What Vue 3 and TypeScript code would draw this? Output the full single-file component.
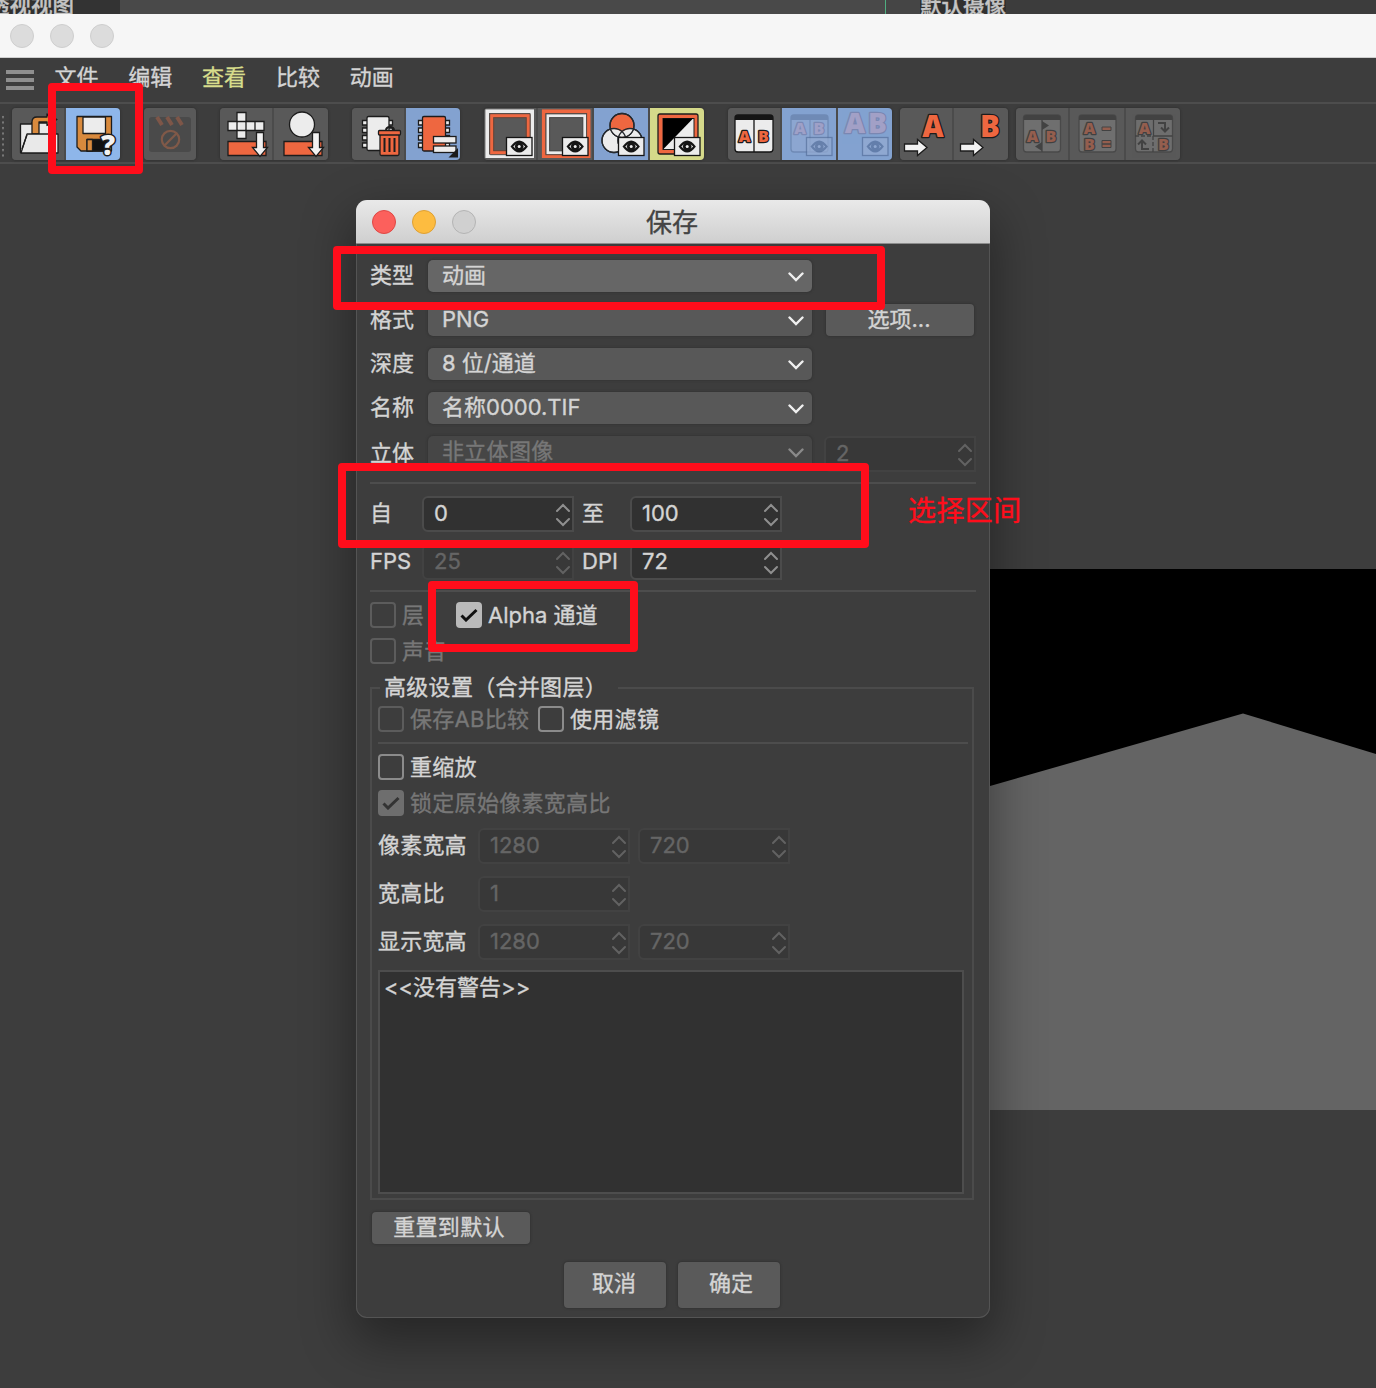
<script setup lang="ts">
interface ToolButton {
  id: string
  x: number
  w: number
  tone?: string
}

const menus = [
  { label: '文件' },
  { label: '编辑' },
  { label: '查看', active: true },
  { label: '比较' },
  { label: '动画' },
]

const groups: ToolButton[][] = [
  [{ id: 'open', x: 12, w: 52 }, { id: 'save', x: 66, w: 54, tone: 'bright' }],
  [{ id: 'clap', x: 144, w: 52 }],
  [{ id: 'grid', x: 220, w: 52 }, { id: 'sphere', x: 274, w: 54 }],
  [{ id: 'trash', x: 352, w: 52 }, { id: 'film', x: 406, w: 54, tone: 'blue' }],
  [
    { id: 'frameA', x: 484, w: 52 },
    { id: 'frameB', x: 538, w: 54 },
    { id: 'rgb', x: 594, w: 54, tone: 'blue' },
    { id: 'alpha', x: 650, w: 54, tone: 'yellow' },
  ],
  [
    { id: 'ab', x: 728, w: 52 },
    { id: 'abEye', x: 782, w: 54, tone: 'blue' },
    { id: 'abBig', x: 838, w: 54, tone: 'blue' },
  ],
  [{ id: 'setA', x: 900, w: 52 }, { id: 'setB', x: 954, w: 54 }],
  [
    { id: 'swap', x: 1016, w: 52 },
    { id: 'equal', x: 1070, w: 54 },
    { id: 'rotate', x: 1126, w: 54 },
  ],
]

const gapBefore = [0, 24, 24, 24, 24, 24, 8, 8]

const eyeAt: Record<string, [number, number]> = {
  frameA: [506, 137],
  frameB: [562, 137],
  rgb: [618, 137],
  alpha: [674, 137],
  abEye: [806, 137],
  abBig: [862, 137],
}

const selects = [
  { label: '类型', value: '动画', hot: true },
  { label: '格式', value: 'PNG', button: '选项...' },
  { label: '深度', value: '8 位/通道' },
  { label: '名称', value: '名称0000.TIF' },
  { label: '立体', value: '非立体图像', off: true, spin: '2' },
]

const ranges = [
  [{ label: '自', value: '0' }, { label: '至', value: '100' }],
  [{ label: 'FPS', value: '25', off: true }, { label: 'DPI', value: '72' }],
]

const sizes = [
  { label: '像素宽高', values: ['1280', '720'] },
  { label: '宽高比', values: ['1'] },
  { label: '显示宽高', values: ['1280', '720'] },
]
</script>

<template>
  <div class="desk">
    <div class="behind">
      <span class="strip-left"><span class="cut">透视视图</span></span>
      <span class="strip-mid"></span>
      <span class="strip-right"><span class="cut">默认摄像</span></span>
    </div>

    <div class="titlebar">
      <i class="dot"></i><i class="dot"></i><i class="dot"></i>
    </div>

    <nav class="menubar">
      <span class="burger"><i></i><i></i><i></i></span>
      <span v-for="m in menus" :key="m.label" class="menu" :class="{ active: m.active }">{{ m.label }}</span>
    </nav>

    <div class="toolbar">
      <span class="grip"></span>
      <div v-for="(g, gi) in groups" :key="gi" class="group" :style="{ marginLeft: gapBefore[gi] + 'px' }">
        <div v-for="b in g" :key="b.id" class="tool" :class="b.tone" :style="{ width: b.w + 'px' }">
          <svg :width="b.w" height="52" :viewBox="`${b.x} 108 ${b.w} 52`">
            <g v-if="b.id === 'open'" stroke="#1c1c1c" stroke-width="1.3" stroke-linejoin="round">
              <path d="M20.500 124h11v-1h24v29.500H20.500z" fill="#e9e9e9" />
              <path d="M32 134v-12q0-5 5-5h10v-3l10 5.500-10 6v-3.500h-8v12z" fill="#d98a3d" />
              <path d="M27 134h31v19H21z" fill="#e9e9e9" />
              <path d="M22 149l5-14" fill="none" />
            </g>
            <g v-else-if="b.id === 'save'" stroke="#1c1c1c" stroke-width="1.3" stroke-linejoin="round">
              <path d="M77 116.500h34.500v34.500H81l-4-4z" fill="#d98a3d" />
              <path d="M83 117h22.500v16.500H83z" fill="#ececec" />
              <path d="M87 139.500h20v11.500H87z" fill="#111" />
              <path d="M87 139.500h5.500v11.500H87z" fill="#d98a3d" />
              <text class="glyph query" x="108" y="154.500" font-size="28">?</text>
            </g>
            <g v-else-if="b.id === 'clap'">
              <rect x="149" y="117" width="42" height="35" rx="3" fill="#4a4a4a" />
              <g stroke="#7d5648" stroke-width="4"><path d="M157 117l5 8M167 117l5 8M177 117l5 8" /></g>
              <g fill="none" stroke="#805948" stroke-width="2.200">
                <circle cx="170.500" cy="139.500" r="8.700" /><path d="M164.500 145.500l12-12" />
              </g>
            </g>
            <g v-else-if="b.id === 'grid' || b.id === 'sphere'" stroke="#1c1c1c" stroke-width="1.300">
              <template v-if="b.id === 'grid'">
                <path d="M228 141.500h38v14h-38z" fill="#ee6740" />
                <path d="M237 112.500h9v9h18v9h-18v8h-9v-8h-9v-9h9z" fill="#ececec" />
                <path d="M237 121.500h9v9h-9zM255 121.500v9" fill="none" />
                <path d="M256.500 132.500h7v15h4l-7.500 9-7.500-9h4z" fill="#f2f2f2" />
              </template>
              <template v-else>
                <path d="M284 141.500h38v14h-38z" fill="#ee6740" />
                <circle cx="302" cy="124.500" r="12.500" fill="#ececec" />
                <path d="M312.500 132.500h7v15h4l-7.500 9-7.500-9h4z" fill="#f2f2f2" />
              </template>
            </g>
            <g v-else-if="b.id === 'trash'" stroke="#1c1c1c" stroke-width="1.300">
              <path d="M362.500 120.500h30v4.500h-30zM362.500 128h30v4.500h-30zM362.500 135.500h30v4.500h-30zM362.500 143h30v4.500h-30z" fill="#ececec" />
              <rect x="367" y="116.500" width="22" height="34" rx="1.500" fill="#ececec" />
              <path d="M386 130.500q0-3.500 4-3.500t4 3.500" fill="none" stroke-width="2" />
              <rect x="380" y="134" width="19" height="21.500" rx="1.500" fill="#ee6740" />
              <rect x="378.500" y="130.500" width="22" height="4.500" rx="1" fill="#ee6740" />
              <path d="M384.500 138v14M389.500 138v14M394.500 138v14" stroke-width="2" />
            </g>
            <g v-else-if="b.id === 'film'" stroke="#1c1c1c" stroke-width="1.300">
              <path d="M418.500 120.500h31v4.500h-31zM418.500 128h31v4.500h-31zM418.500 135.500h31v4.500h-31zM418.500 143h31v4.500h-31z" fill="#ececec" />
              <rect x="422.500" y="116.500" width="23" height="34.500" rx="1.500" fill="#ee6740" />
              <rect x="433.500" y="136.500" width="22.500" height="6.500" fill="#ececec" />
              <rect x="433.500" y="146" width="22.500" height="6.500" fill="#ececec" />
              <path d="M458 148v9.500h-9.500z" fill="#1c1c1c" stroke="none" />
            </g>
            <g v-else-if="b.id === 'frameA'" fill="none">
              <rect x="487.200" y="111.200" width="45" height="45" stroke="#ececec" stroke-width="3.600" />
              <rect x="491.700" y="115.700" width="36.500" height="37" stroke="#ee6740" stroke-width="3.400" />
              <rect x="489.700" y="113.700" width="40.500" height="41" rx="1" stroke="#5c4a44" stroke-width="1" />
              <rect x="493.700" y="117.700" width="32.500" height="33" stroke="#6b4436" stroke-width="1" />
            </g>
            <g v-else-if="b.id === 'frameB'" fill="none">
              <rect x="543.700" y="111.200" width="45" height="45" stroke="#ee6740" stroke-width="3.600" />
              <rect x="547.700" y="115.700" width="37" height="37" stroke="#ececec" stroke-width="3" />
              <rect x="545.900" y="113.700" width="40.700" height="41" stroke="#5c4a44" stroke-width="1" />
              <rect x="549.700" y="117.700" width="33" height="33" stroke="#4a4a4a" stroke-width="1" />
            </g>
            <g v-else-if="b.id === 'rgb'" stroke="#25292e" stroke-width="1.300">
              <circle cx="614" cy="140.500" r="12" fill="#ececec" />
              <circle cx="630" cy="140.500" r="12" fill="#ececec" />
              <circle cx="622" cy="125.500" r="12" fill="#ee6740" />
              <path d="M610.500 129q5.500-1.500 11.500 3 6-4.500 11.500-3-4 8-11.500 8t-11.500-8z" fill="#ececec" stroke="none" />
              <circle cx="622" cy="125.500" r="12" fill="none" />
              <circle cx="614" cy="140.500" r="12" fill="none" />
              <circle cx="630" cy="140.500" r="12" fill="none" />
            </g>
            <g v-else-if="b.id === 'alpha'">
              <rect x="658" y="114" width="40" height="40" rx="2" fill="#ee6740" stroke="#1c1c1c" stroke-width="1.300" />
              <rect x="663" y="118.500" width="31" height="31" fill="#ececec" stroke="#1c1c1c" />
              <path d="M663 118.500h30l-30 31z" fill="#000" />
            </g>
            <g v-else-if="b.id === 'ab'">
              <rect x="735" y="115" width="38" height="37" rx="3" fill="#ececec" stroke="#151515" stroke-width="1.300" />
              <path d="M735 120v-2q0-3 3-3h32q3 0 3 3v2z" fill="#151515" />
              <path d="M754 120v32" stroke="#151515" stroke-width="1.300" />
              <text class="glyph" x="744.500" y="141.500" font-size="16">A</text>
              <text class="glyph" x="763.500" y="141.500" font-size="16">B</text>
            </g>
            <g v-else-if="b.id === 'abEye'" opacity=".55">
              <rect x="791" y="115" width="37" height="37" rx="3" fill="#94abd2" stroke="#5f77a0" stroke-width="1.300" />
              <path d="M791 120v-2q0-3 3-3h31q3 0 3 3v2z" fill="#5f77a0" />
              <path d="M810 120v32" stroke="#5f77a0" />
              <text class="glyph dim" x="800" y="134" font-size="16">A</text>
              <text class="glyph dim" x="819" y="134" font-size="16">B</text>
            </g>
            <g v-else-if="b.id === 'abBig'" opacity=".6">
              <text class="glyph dim" x="855" y="132.500" font-size="28">A</text>
              <text class="glyph dim" x="877.500" y="132.500" font-size="28">B</text>
            </g>
            <g v-else-if="b.id === 'setA' || b.id === 'setB'">
              <text v-if="b.id === 'setA'" class="glyph" x="933" y="137" font-size="29.500">A</text>
              <text v-else class="glyph" x="990" y="137" font-size="29.500">B</text>
              <path
                :transform="b.id === 'setB' ? 'translate(56 0)' : ''"
                d="M904.500 144h13v-4.500l9.500 8-9.500 8V151h-13z"
                fill="#f2f2f2"
                stroke="#1c1c1c"
                stroke-width="1.300"
              />
            </g>
            <g v-else opacity=".4">
              <g :transform="`translate(${b.id === 'swap' ? 0 : b.id === 'equal' ? 55.5 : 112} 0)`">
                <rect x="1023.500" y="115" width="37" height="37" rx="3" fill="#909090" stroke="#333" stroke-width="1.300" />
                <path d="M1023.500 120v-2q0-3 3-3h31q3 0 3 3v2z" fill="#222" />
              </g>
              <template v-if="b.id === 'swap'">
                <path d="M1042 120v32" stroke="#222" stroke-width="1.300" />
                <path d="M1042 121l7 4.500-7 4.500zM1042 142l-7 4.500 7 4.500z" fill="#222" />
                <text class="glyph" x="1032.500" y="141.500" font-size="16">A</text>
                <text class="glyph" x="1051" y="141.500" font-size="16">B</text>
              </template>
              <template v-else-if="b.id === 'equal'">
                <text class="glyph" x="1089.500" y="134" font-size="16">A</text>
                <text class="glyph" x="1089.500" y="149.500" font-size="16">B</text>
                <path d="M1102 127h9v3.500h-9zM1102 140.500h9v3.500h-9zM1102 144h9v3.500h-9z" fill="#ee6740" stroke="#222" />
              </template>
              <template v-else>
                <path d="M1153.500 120v16h19" fill="none" stroke="#222" stroke-width="1.300" />
                <path d="M1135 136h18v17" fill="none" stroke="#222" stroke-width="1.300" stroke-dasharray="4 2" />
                <path d="M1158 123h7v8m-4-3.500l4 4 4-4M1149 149h-7v-8m-4 3.500l4-4 4 4" fill="none" stroke="#222" stroke-width="2" />
                <text class="glyph" x="1144.500" y="134" font-size="16">A</text>
                <text class="glyph" x="1163.500" y="149.500" font-size="16">B</text>
              </template>
            </g>
            <g
              v-if="eyeAt[b.id]"
              :transform="`translate(${eyeAt[b.id][0]} ${eyeAt[b.id][1]})`"
              :opacity="b.id.startsWith('ab') ? 0.7 : 1"
            >
              <rect x=".5" y=".5" width="25.500" height="18" :fill="b.id.startsWith('ab') ? '#94abd2' : '#ececec'" :stroke="b.id.startsWith('ab') ? '#56709c' : '#151515'" stroke-width="1.300" />
              <g :fill="b.id.startsWith('ab') ? '#56709c' : '#151515'">
                <path d="M4.500 9.500q8.700-12 17.400 0-8.700 12-17.400 0z" />
                <path d="M7.200 9.500q6-7 12 0-6 7-12 0z" :fill="b.id.startsWith('ab') ? '#94abd2' : '#ececec'" />
                <circle cx="13.200" cy="9.500" r="4.300" />
                <circle cx="13.200" cy="9.500" r="1.500" :fill="b.id.startsWith('ab') ? '#94abd2' : '#ececec'" />
              </g>
            </g>
          </svg>
        </div>
      </div>
    </div>

    <svg class="render" width="386" height="541" viewBox="0 0 386 541">
      <path d="M0 0h386v541H0z" fill="#000" />
      <path d="M0 217L253 144.500 386 185V541H0z" fill="#646464" />
    </svg>

    <section class="dialog">
      <header class="dialog-title">
        <i class="dot red"></i><i class="dot amber"></i><i class="dot idle"></i>
        <span class="caption">保存</span>
      </header>
      <div class="body">
        <div class="selects">
          <div v-for="s in selects" :key="s.label" class="row">
            <label :class="{ low: s.off }">{{ s.label }}</label>
            <div class="select" :class="{ hot: s.hot, off: s.off }">
              <span>{{ s.value }}</span>
              <svg width="16" height="10" viewBox="0 0 16 10"><path d="M1.500 1.500L8 8l6.500-6.500" /></svg>
            </div>
            <button v-if="s.button" class="btn options">{{ s.button }}</button>
            <div v-if="s.spin" class="spin off stereo">
              <span>{{ s.spin }}</span>
              <svg width="16" height="24" viewBox="0 0 16 24"><path d="M2 8L8 2l6 6M2 16l6 6 6-6" /></svg>
            </div>
          </div>
        </div>
        <hr class="rule first" />
        <div class="ranges">
          <div v-for="(r, i) in ranges" :key="i" class="row">
            <template v-for="f in r" :key="f.label">
              <label>{{ f.label }}</label>
              <div class="spin" :class="{ off: f.off }">
                <span>{{ f.value }}</span>
                <svg width="16" height="24" viewBox="0 0 16 24"><path d="M2 8L8 2l6 6M2 16l6 6 6-6" /></svg>
              </div>
            </template>
          </div>
        </div>
        <hr class="rule second" />
        <div class="checks">
          <div class="check off layer"><i></i><span>层</span></div>
          <div class="check alpha">
            <i class="on"><svg width="18" height="14" viewBox="0 0 18 14"><path d="M1.500 7.500L6 12 16.500 2" /></svg></i>
            <span>Alpha 通道</span>
          </div>
        </div>
        <div class="check off sound"><i></i><span>声音</span></div>

        <fieldset class="advanced">
          <legend>高级设置（合并图层）</legend>
          <div class="pair">
            <div class="check off compare"><i></i><span>保存AB比较</span></div>
            <div class="check"><i></i><span>使用滤镜</span></div>
          </div>
          <hr class="rule inner" />
          <div class="check"><i></i><span>重缩放</span></div>
          <div class="check off lock">
            <i class="on"><svg width="18" height="14" viewBox="0 0 18 14"><path d="M1.500 7.500L6 12 16.500 2" /></svg></i>
            <span>锁定原始像素宽高比</span>
          </div>
          <div v-for="z in sizes" :key="z.label" class="size">
            <label>{{ z.label }}</label>
            <div v-for="v in z.values" :key="v" class="spin off">
              <span>{{ v }}</span>
              <svg width="16" height="24" viewBox="0 0 16 24"><path d="M2 8L8 2l6 6M2 16l6 6 6-6" /></svg>
            </div>
          </div>
          <div class="log">&lt;&lt;没有警告&gt;&gt;</div>
        </fieldset>

        <button class="btn reset">重置到默认</button>
        <div class="actions">
          <button class="btn">取消</button>
          <button class="btn">确定</button>
        </div>
      </div>
    </section>

    <div class="mark save-mark"></div>
    <div class="mark type-mark"></div>
    <div class="mark range-mark"></div>
    <div class="mark alpha-mark"></div>
    <div class="note">选择区间</div>
  </div>
</template>

<style>
body {
  background: #3d3d3d;
}
</style>

<style scoped>
.desk {
  position: relative;
  width: 1376px;
  height: 1388px;
  overflow: hidden;
  background: #3d3d3d;
  color: #d4d4d4;
  font: 22px/32px Inter, 'Noto Sans CJK SC', sans-serif;
  -webkit-text-stroke: 0.35px currentColor;
}
.desk * {
  box-sizing: border-box;
}
.desk svg {
  -webkit-text-stroke: 0;
}
.behind {
  display: flex;
  height: 14px;
  overflow: hidden;
  background: #3c3c3c;
  color: #c4c4c4;
}
.strip-left {
  display: flex;
  justify-content: flex-end;
  width: 120px;
  padding-right: 46px;
  background: #333;
}
.strip-mid {
  width: 766px;
  background: #494949;
  border-right: 1px solid #4fae80;
}
.strip-right {
  display: flex;
  align-items: flex-start;
  flex: 1;
  padding-left: 34px;
  background: linear-gradient(90deg, #454545 34px, #3c3c3c 34px);
}
.cut {
  flex: none;
  height: 32px;
  margin-top: -11px;
  background: #303030;
  font-size: 21.500px;
  font-weight: 500;
  white-space: nowrap;
}
.titlebar {
  display: flex;
  gap: 16px;
  height: 44px;
  padding: 10px;
  background: #f6f6f6;
  border-bottom: 1px solid #cfcfcf;
}
.dot {
  width: 24px;
  height: 24px;
  border: 1px solid #cecece;
  border-radius: 50%;
  background: #dcdcdc;
}
.menubar {
  display: flex;
  height: 44px;
  padding-left: 6px;
}
.burger {
  display: flex;
  flex-direction: column;
  gap: 4px;
  width: 48.500px;
  padding-top: 12px;
}
.burger i {
  width: 28px;
  height: 4px;
  background: #8f8f8f;
}
.menu {
  width: 73.800px;
  padding-top: 3px;
  white-space: nowrap;
}
.menu.active {
  color: #d8dd8c;
}
.toolbar {
  display: flex;
  height: 62px;
  padding-top: 4px;
  border-top: 2px solid #4d4d4d;
  border-bottom: 2px solid #4d4d4d;
}
.grip {
  width: 12px;
  height: 42px;
  margin-top: 7px;
  background: radial-gradient(circle at 3px 2px, #777 1px, transparent 1.500px) 0 0 / 12px 5.500px;
}
.group {
  display: flex;
  gap: 2px;
  height: 52px;
  border-radius: 4px;
  overflow: hidden;
  background: #4b4b4b;
  box-shadow: 0 0 2px 1px #343434;
}
.tool {
  height: 52px;
  background: #595959;
}
.tool svg {
  display: block;
}
.tool.bright {
  background: #8eb6ea;
}
.tool.blue {
  background: #83a2d0;
}
.tool.yellow {
  background: #d5d98a;
}
.glyph {
  fill: #ee6740;
  stroke: #1c1c1c;
  stroke-width: 2.600px;
  stroke-linejoin: round;
  paint-order: stroke;
  text-anchor: middle;
  font-family: 'Open Sans', sans-serif;
  font-weight: 800;
}
.glyph.dim {
  fill: #b79fc0;
  stroke: #76769f;
}
.glyph.query {
  fill: #f2f2f2;
  stroke-width: 3px;
}
.render {
  position: absolute;
  left: 990px;
  top: 569px;
}
.dialog {
  position: absolute;
  left: 356px;
  top: 200px;
  width: 634px;
  height: 1118px;
  border-radius: 11px;
  background: #3d3d3d;
  box-shadow: inset 0 0 0 1px #545454, 0 20px 50px 4px rgba(0, 0, 0, 0.38);
}
.dialog-title {
  position: relative;
  display: flex;
  gap: 16px;
  height: 44px;
  padding: 10px 16px;
  border-bottom: 1px solid #8c8c8c;
  border-radius: 11px 11px 0 0;
  background: linear-gradient(#e9e9e9, #cfcfcf);
}
.red {
  background: #fc605c;
  border-color: #df4744;
}
.amber {
  background: #fdbc40;
  border-color: #dea034;
}
.idle {
  background: #d0d0d0;
  border-color: #b4b4b4;
}
.caption {
  position: absolute;
  left: 0;
  right: 2px;
  top: 7px;
  text-align: center;
  font-size: 26px;
  color: #444;
}
.body {
  display: flex;
  flex-direction: column;
  align-items: flex-start;
  padding: 16px 14px 0;
}
.selects {
  display: flex;
  flex-direction: column;
  gap: 12px;
}
.row {
  display: flex;
  height: 32px;
}
.row label {
  width: 58px;
  margin-top: -1px;
}
.row label.low {
  margin-top: 1px;
}
.select {
  display: flex;
  justify-content: space-between;
  align-items: center;
  width: 384px;
  padding: 0 8px 0 14px;
  border-radius: 5px;
  background: #585858;
  box-shadow: 0 0 2px 1px #353535;
}
.select span {
  margin-top: -2px;
}
.select svg,
.spin svg {
  fill: none;
  stroke: #f0f0f0;
  stroke-width: 2.400px;
  stroke-linecap: round;
}
.select svg {
  margin-top: 2px;
}
.select.hot {
  background: #666;
}
.select.off {
  background: #464646;
  color: #777;
  letter-spacing: 0.3px;
}
.select.off svg {
  stroke: #8a8a8a;
}
.btn {
  border: 0;
  padding: 0 0 2px;
  border-radius: 4px;
  background: #5a5a5a;
  box-shadow: 0 0 2px 1px #343434;
  color: #d4d4d4;
  font: inherit;
}
.options {
  width: 148px;
  margin-left: 14px;
  padding-right: 2px;
  line-height: 30px;
}
.spin {
  display: flex;
  justify-content: space-between;
  flex: none;
  width: 152px;
  height: 36px;
  padding: 0 1px 0 10px;
  border: 2px solid #4b4b4b;
  border-radius: 6px 0 0 6px;
  background: #313131;
}
.spin span {
  line-height: 31px;
}
.spin svg {
  margin-top: 5px;
  stroke: #8f8f8f;
  stroke-width: 2px;
}
.spin.off {
  background: #383838;
  border-color: #424242;
  color: #656565;
}
.spin.off svg {
  stroke: #626262;
}
.stereo {
  margin-left: 12px;
}
.rule {
  width: 606px;
  height: 2px;
  margin: 0;
  border: 0;
  background: #4d4d4d;
}
.rule.first {
  margin-top: 14px;
}
.ranges {
  display: flex;
  flex-direction: column;
  gap: 12px;
  margin-top: 12px;
}
.ranges .row {
  height: 36px;
}
.ranges label {
  width: 52px;
  margin-top: 1px;
}
.ranges .spin + label {
  width: 48px;
  margin-left: 8px;
}
.rule.second {
  margin-top: 10px;
}
.checks {
  display: flex;
  gap: 32px;
  margin-top: 10px;
}
.check {
  display: flex;
  gap: 6px;
  height: 26px;
  line-height: 27px;
  letter-spacing: 0.3px;
  white-space: nowrap;
}
.check.layer,
.check.alpha {
  letter-spacing: 0;
}
.check.compare {
  width: 150px;
}
.check i {
  display: flex;
  align-items: center;
  justify-content: center;
  flex: none;
  width: 26px;
  height: 26px;
  border: 2px solid #8b8b8b;
  border-radius: 4px;
}
.check i.on {
  border: 0;
  background: #bababa;
}
.check svg {
  fill: none;
  stroke: #111;
  stroke-width: 3px;
}
.check.off {
  color: #777;
}
.check.off i {
  border-color: #5c5c5c;
}
.check.off i.on {
  background: #6e6e6e;
}
.check.off svg {
  stroke: #333;
}
.sound {
  margin-top: 10px;
}
.advanced {
  width: 604px;
  height: 528px;
  min-width: 0;
  margin: 8px 0 0;
  padding: 2px 6px 0;
  border: 2px solid #4b4b4b;
}
.advanced legend {
  width: 238px;
  height: 32px;
  margin-left: 2px;
  padding: 0 0 0 4px;
  line-height: 30px;
  letter-spacing: 0.3px;
  white-space: nowrap;
}
.pair {
  display: flex;
  gap: 10px;
}
.rule.inner {
  width: 590px;
  margin: 10px 0;
}
.lock {
  margin-top: 10px;
}
.size {
  display: flex;
  gap: 8px;
  height: 36px;
  margin-top: 12px;
}
.size label {
  width: 92px;
  margin-top: 1px;
  letter-spacing: 0.2px;
}
.log {
  width: 586px;
  height: 224px;
  margin-top: 10px;
  padding: 0 4px;
  border: 2px solid #4d4d4d;
  background: #313131;
  line-height: 30px;
}
.reset {
  width: 158px;
  height: 32px;
  margin: 12px 0 0 2px;
  padding-right: 4px;
  line-height: 30px;
  letter-spacing: 0.3px;
}
.actions {
  display: flex;
  gap: 12px;
  margin: 18px 0 0 194px;
}
.actions .btn {
  width: 102px;
  height: 46px;
  padding: 0 2px 4px 0;
}
.actions .btn + .btn {
  padding: 0 0 4px 4px;
}
.mark {
  position: absolute;
  border: 8px solid #ff0d1b;
  border-radius: 4px;
}
.save-mark {
  left: 48px;
  top: 83px;
  width: 95px;
  height: 91px;
}
.type-mark {
  left: 333px;
  top: 246px;
  width: 552px;
  height: 64px;
}
.range-mark {
  left: 338px;
  top: 463px;
  width: 531px;
  height: 85px;
}
.alpha-mark {
  left: 428px;
  top: 581px;
  width: 210px;
  height: 71px;
}
.note {
  position: absolute;
  left: 908px;
  top: 491px;
  color: #ff0d1b;
  font-size: 28px;
  line-height: 40px;
  letter-spacing: 0.4px;
}
</style>
